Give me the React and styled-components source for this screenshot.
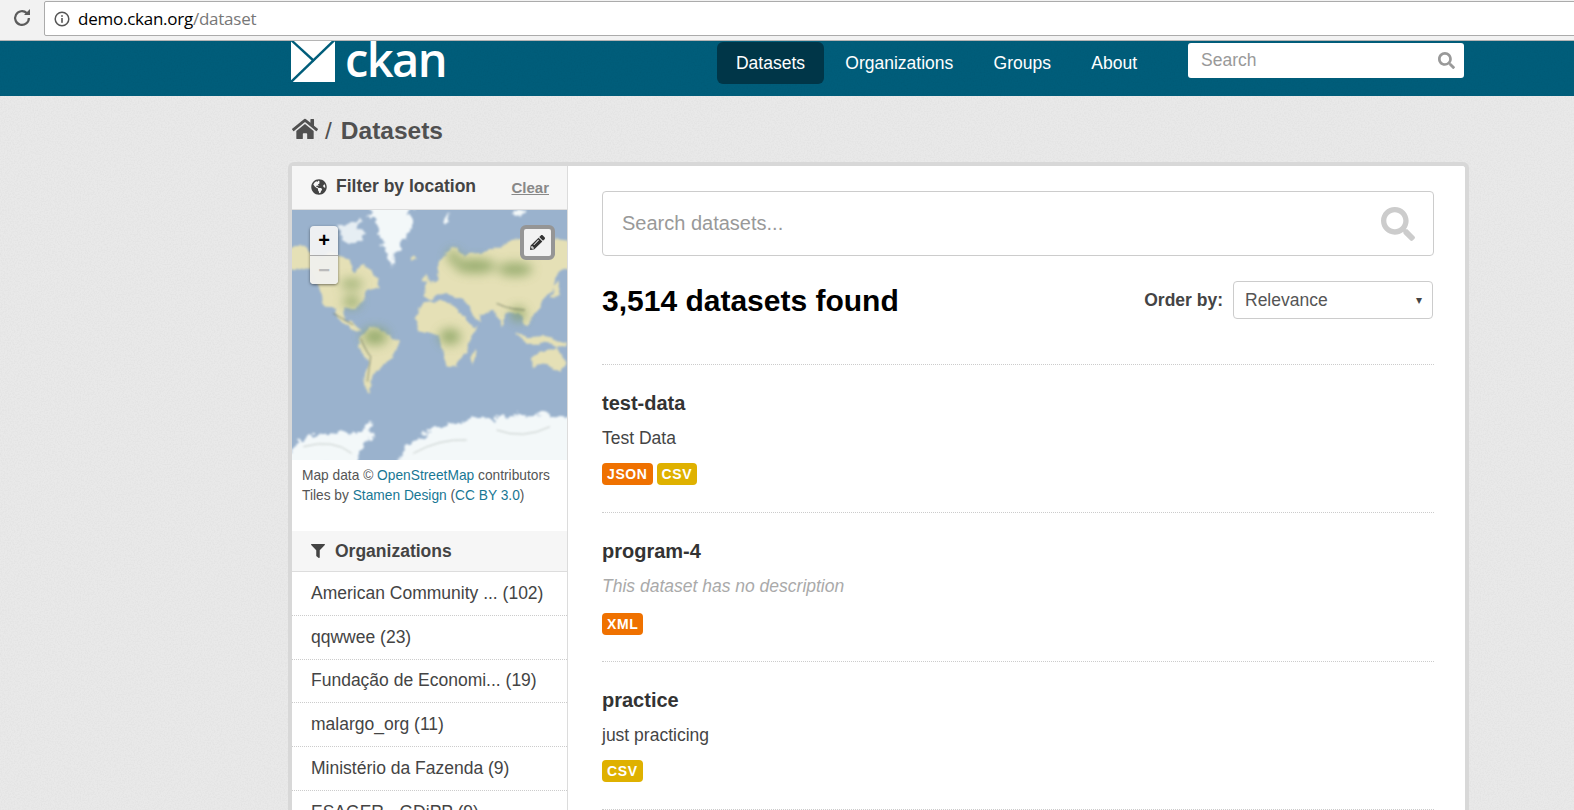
import React from "react";
import styled, { createGlobalStyle } from "styled-components";
import { FaHome, FaSearch, FaFilter, FaPencilAlt, FaGlobeAmericas } from "react-icons/fa";

const noise = "url(\"data:image/svg+xml,%3Csvg xmlns='http://www.w3.org/2000/svg' width='200' height='200'%3E%3Cfilter id='n'%3E%3CfeTurbulence type='fractalNoise' baseFrequency='0.7' numOctaves='2'/%3E%3CfeColorMatrix values='0 0 0 0 0 0 0 0 0 0 0 0 0 0 0 0 0 0 0.9 -0.38'/%3E%3C/filter%3E%3Crect width='200' height='200' filter='url(%23n)' opacity='0.07'/%3E%3C/svg%3E\")";

const Global = createGlobalStyle`
  html, body { margin: 0; padding: 0; height: 810px; overflow: hidden; }
  body { font-family: "Liberation Sans", Arial, sans-serif; background: #e9e9e9; }
  * { box-sizing: border-box; }
`;

const Page = styled.div`
  width: 1574px;
  height: 810px;
  overflow: hidden;
  background: #e9e9e9 ${noise};
`;

const BrowserBar = styled.div`
  height: 41px;
  display: flex;
  align-items: flex-start;
  padding: 1px 0 0 12px;
  gap: 12px;
  background: #f2f2f2;
  border-bottom: 1px solid #b5b5b5;
`;

const Reload = styled.div`
  display: flex;
  height: 33px;
  align-items: center;
  color: #5c5c5c;
`;

const UrlBox = styled.div`
  flex: 1;
  height: 35px;
  margin-right: -4px;
  display: flex;
  align-items: center;
  gap: 8px;
  padding-left: 9px;
  background: #fff;
  border: 1px solid #ababab;
  border-radius: 2px;
  font-family: "Open Sans", sans-serif;
  font-size: 17px;
  letter-spacing: -0.25px;
  color: #000;
`;

const UrlPath = styled.span`
  color: #777;
`;

const Header = styled.header`
  height: 55px;
  overflow: hidden;
  background: #005d7a ${noise};
  padding-left: 291px;
`;

const HeaderInner = styled.div`
  width: 1173px;
  height: 55px;
  display: flex;
  align-items: flex-start;
`;

const Logo = styled.div`
  display: flex;
  align-items: flex-start;
  gap: 10px;
  margin-right: auto;
`;

const LogoText = styled.span`
  font-family: "Open Sans", sans-serif;
  font-weight: 600;
  font-size: 47px;
  line-height: 36px;
  color: #fff;
  letter-spacing: -1.6px;
`;

const Nav = styled.nav`
  display: flex;
  gap: 2.3px;
  margin: 1px 32px 0 0;
`;

const NavLink = styled.a`
  height: 42px;
  padding: 0 19px;
  display: flex;
  align-items: center;
  font-size: 17.5px;
  color: #fff;
  border-radius: 6px;
  background: ${(p) => (p.$active ? "#003648" : "transparent")};
`;

const HeaderSearch = styled.div`
  width: 276px;
  height: 35px;
  margin-top: 2px;
  display: flex;
  align-items: center;
  justify-content: space-between;
  padding: 0 9px 0 13px;
  background: #fff;
  border-radius: 3px;
  font-size: 17.5px;
  color: #999;
`;

const Crumbs = styled.div`
  height: 66px;
  padding: 20px 0 0 292px;
  display: flex;
  align-items: flex-start;
  gap: 7px;
  font-size: 24.5px;
  line-height: 29px;
  color: #505050;
`;

const CrumbStrong = styled.strong`
  font-weight: 700;
  margin-left: 2px;
`;

const Wrapper = styled.div`
  margin-left: 288px;
  width: 1181px;
  display: flex;
  height: 663px;
  background: #fff;
  border: 4px solid #d8d8d8;
  border-bottom: 0;
  border-radius: 6px 6px 0 0;
`;

const Side = styled.aside`
  width: 276px;
  flex: none;
  border-right: 1px solid #dcdcdc;
`;

const SectionHead = styled.div`
  height: ${(p) => p.$h}px;
  display: flex;
  align-items: center;
  padding: 0 18px ${(p) => p.$pb || 0}px 19px;
  background: #f6f6f6;
  border-bottom: 1px solid #ddd;
  font-size: 17.5px;
  font-weight: 700;
  color: #444;
`;

const HeadIcon = styled.span`
  display: flex;
  width: ${(p) => p.$w}px;
  flex: none;
`;

const Clear = styled.a`
  margin-left: auto;
  font-size: 15px;
  margin-top: 1px;
  color: #888;
  text-decoration: underline;
`;

const MapBox = styled.div`
  position: relative;
  width: 275px;
  height: 250px;
  overflow: hidden;
  background: #9ab2cd;
`;

const ZoomControl = styled.div`
  position: absolute;
  left: 18px;
  top: 16px;
  width: 28px;
  border-radius: 4px;
  background: rgba(245, 245, 245, 0.92);
  box-shadow: 0 1px 3px rgba(0, 0, 0, 0.5);
`;

const ZoomBtn = styled.div`
  height: 29px;
  display: flex;
  align-items: center;
  justify-content: center;
  font-size: 20px;
  font-weight: 700;
  color: ${(p) => (p.$off ? "#bbb" : "#000")};
  background: ${(p) => (p.$off ? "rgba(238,238,232,.8)" : "transparent")};
  border-top: ${(p) => (p.$off ? "1px solid #aaa" : "0")};
  border-radius: 0 0 4px 4px;
`;

const DrawBtn = styled.div`
  position: absolute;
  left: 228px;
  top: 15px;
  width: 35px;
  height: 35px;
  display: flex;
  align-items: center;
  justify-content: center;
  background: #f2f2f2;
  border: 4px solid #959595;
  border-radius: 6px;
  color: #333;
`;

const Attribution = styled.p`
  margin: 0;
  height: 71px;
  padding: 6px 0 0 10px;
  font-size: 13.75px;
  line-height: 20px;
  color: #555;
`;

const TextLink = styled.a`
  color: #187794;
`;

const OrgList = styled.ul`
  list-style: none;
  margin: 0;
  padding: 0;
`;

const OrgItem = styled.li`
  height: 43.8px;
  padding: 0 0 0 19px;
  display: flex;
  align-items: center;
  font-size: 17.5px;
  color: #444;
  border-bottom: 1px dotted #ccc;
`;

const Main = styled.main`
  flex: 1;
  padding: 25px 31px 0 34px;
`;

const SearchBox = styled.div`
  height: 65px;
  display: flex;
  align-items: center;
  justify-content: space-between;
  padding: 0 18px 0 19px;
  border: 1px solid #ccc;
  border-radius: 4px;
  font-size: 20px;
  color: #999;
`;

const ResultBar = styled.div`
  height: 109px;
  padding-top: 25px;
  display: flex;
  justify-content: space-between;
  align-items: flex-start;
  border-bottom: 1px dotted #ccc;
`;

const Count = styled.h1`
  margin: 1px 0 0;
  font-size: 30px;
  line-height: 38px;
  font-weight: 700;
  color: #000;
`;

const OrderBy = styled.div`
  display: flex;
  align-items: center;
  gap: 10px;
  font-size: 17.5px;
  font-weight: 700;
  color: #444;
  margin-right: 1px;
`;

const SelectBox = styled.div`
  width: 200px;
  height: 38px;
  display: flex;
  align-items: center;
  justify-content: space-between;
  padding: 0 10px 0 11px;
  border: 1px solid #ccc;
  border-radius: 4px;
  font-weight: 400;
  color: #555;
`;

const Caret = styled.span`
  font-size: 12px;
  color: #444;
`;

const Row = styled.article`
  height: 148.3px;
  padding-top: 25px;
  border-bottom: 1px dotted #ccc;
`;

const Title = styled.h3`
  margin: 0;
  font-size: 20px;
  line-height: 26px;
  font-weight: 700;
  color: #333;
`;

const Desc = styled.div`
  margin-top: 10px;
  font-size: 17.5px;
  line-height: 25px;
  color: ${(p) => (p.$empty ? "#aaa" : "#444")};
  font-style: ${(p) => (p.$empty ? "italic" : "normal")};
`;

const Badges = styled.div`
  margin-top: ${(p) => (p.$low ? 14 : 12)}px;
  display: flex;
  gap: 4px;
`;

const Badge = styled.span`
  height: 22px;
  padding: 0 5px;
  display: flex;
  align-items: center;
  border-radius: 4px;
  font-size: 14px;
  font-weight: 700;
  letter-spacing: 0.6px;
  color: #fff;
  background: ${(p) => (p.$kind === "CSV" ? "#dfb100" : "#ef7100")};
`;

function BrowserIcons() {
  return (
    <Reload>
      <svg width="20" height="20" viewBox="0 0 18 18" fill="none">
        <path d="M15.2 9a6.2 6.2 0 1 1-1.9-4.4" stroke="#5c5c5c" strokeWidth="2" />
        <path d="M10.8 6.4h5.4V1z" fill="#5c5c5c" />
      </svg>
    </Reload>
  );
}

function InfoIcon() {
  return (
    <svg width="16" height="16" viewBox="0 0 16 16" fill="none">
      <circle cx="8" cy="8" r="6.8" stroke="#555" strokeWidth="1.5" />
      <rect x="7.2" y="7" width="1.6" height="4.8" fill="#555" />
      <rect x="7.2" y="4.2" width="1.6" height="1.6" fill="#555" />
    </svg>
  );
}

function LogoMark() {
  return (
    <svg width="44" height="41" viewBox="0 0 44 41">
      <rect width="44" height="41" fill="#fff" />
      <path d="M0 -1 L23 20" stroke="#005d7a" strokeWidth="2.4" />
      <path d="M43.5 -1 L0 41" stroke="#005d7a" strokeWidth="2.4" />
    </svg>
  );
}

function WorldMap() {
  return (
    <svg width="275" height="250" viewBox="36 150 825 750">
      <defs>
        <filter id="coast" x="-10%" y="-10%" width="120%" height="120%">
          <feTurbulence type="fractalNoise" baseFrequency="0.022" numOctaves="4" seed="7" result="t" />
          <feDisplacementMap in="SourceGraphic" in2="t" scale="26" xChannelSelector="R" yChannelSelector="G" />
          <feGaussianBlur stdDeviation="3" />
        </filter>
        <filter id="ice" x="-10%" y="-10%" width="120%" height="120%">
          <feTurbulence type="fractalNoise" baseFrequency="0.04" numOctaves="4" seed="3" result="t" />
          <feDisplacementMap in="SourceGraphic" in2="t" scale="44" xChannelSelector="R" yChannelSelector="G" />
          <feGaussianBlur stdDeviation="2.5" />
        </filter>
        <filter id="blur" x="-50%" y="-50%" width="200%" height="200%"><feGaussianBlur stdDeviation="16" /></filter>
        <filter id="ridge"><feGaussianBlur stdDeviation="3" /></filter>
      </defs>
      <rect x="36" y="150" width="825" height="750" fill="#9ab2cd" />
      <g filter="url(#coast)" fill="#e5e0b6">
        <path d="M20 262 L75 260 L100 292 L130 296 L150 282 L180 292 L205 296 L225 345 L245 322 L255 318 L292 352 L302 378 L265 394 L248 427 L222 447 L192 447 L198 482 L245 507 L228 512 L190 492 L160 457 L128 427 L118 392 L100 332 L70 322 L20 332 Z" />
        <path d="M238 537 L268 500 L300 510 L358 547 L338 587 L312 614 L282 642 L268 700 L255 674 L262 602 L238 560 Z" />
        <path d="M403 474 L428 430 L480 422 L532 447 L560 482 L592 500 L574 522 L557 572 L532 614 L500 626 L485 572 L478 529 L418 509 Z" />
        <path d="M430 409 L445 372 L470 352 L476 304 L510 266 L532 262 L548 290 L640 268 L700 240 L790 228 L880 246 L880 327 L834 337 L822 387 L787 422 L762 474 L737 499 L712 454 L680 459 L660 504 L640 449 L605 459 L602 490 L565 454 L545 419 L500 399 L470 404 L448 424 Z" />
        <path d="M753 594 L785 570 L800 580 L830 560 L860 607 L842 636 L790 614 L755 619 Z" />
        <path d="M568 594 L583 564 L588 582 L576 614 Z" />
        <path d="M428 366 L445 344 L454 369 Z" />
        <path d="M392 290 L412 296 L396 306 Z" />
        <path d="M710 515 L745 535 L790 530 L862 545 L852 558 L790 551 L740 551 Z" />
        <path d="M823 382 L840 364 L832 404 L813 414 Z" />
      </g>
      <g filter="url(#blur)" fill="#7f9c58" opacity="0.75">
        <ellipse cx="285" cy="530" rx="38" ry="26" />
        <ellipse cx="510" cy="530" rx="32" ry="24" />
        <ellipse cx="585" cy="318" rx="62" ry="22" />
        <ellipse cx="705" cy="328" rx="52" ry="20" />
        <ellipse cx="215" cy="372" rx="34" ry="14" />
        <ellipse cx="215" cy="425" rx="26" ry="18" />
        <ellipse cx="715" cy="462" rx="22" ry="22" />
        <ellipse cx="520" cy="290" rx="18" ry="20" />
      </g>
      <g fill="none" stroke="#5f6a52" strokeWidth="4" opacity="0.5" filter="url(#ridge)">
        <path d="M242 535 Q258 575 272 590 L262 665" />
        <path d="M650 430 Q690 450 735 450" />
        <path d="M160 460 L220 495" />
      </g>
      <g filter="url(#ice)" fill="#f3f8f9">
        <path d="M262 130 L398 130 L388 215 L348 280 L330 320 L310 260 L288 200 Z" />
        <path d="M20 880 L90 826 L180 816 L235 819 L272 786 L284 829 L234 864 L234 920 L20 920 Z" />
        <path d="M355 888 L400 839 L470 804 L580 769 L640 776 L700 766 L880 766 L880 920 L355 920 Z" />
        <path d="M478 178 L512 156 L492 192 Z" />
        <path d="M168 195 L232 183 L252 230 L210 252 L178 226 Z" opacity="0.85" />
        <path d="M700 150 L730 150 L722 175 Z" />
      </g>
      <g fill="none" stroke="#8d968f" strokeWidth="3" opacity="0.45" filter="url(#ridge)">
        <path d="M400 880 Q480 835 560 840" />
        <path d="M650 810 Q730 840 810 800" />
        <path d="M70 860 Q160 835 215 880" />
      </g>
    </svg>
  );
}

const orgs = [
  "American Community ... (102)",
  "qqwwee (23)",
  "Fundação de Economi... (19)",
  "malargo_org (11)",
  "Ministério da Fazenda (9)",
  "ESAGER - GDiPP (9)",
];

const rows = [
  { title: "test-data", desc: "Test Data", badges: ["JSON", "CSV"] },
  { title: "program-4", desc: "This dataset has no description", empty: true, badges: ["XML"] },
  { title: "practice", desc: "just practicing", badges: ["CSV"] },
];

export default function App() {
  return (
    <Page>
      <Global />
      <BrowserBar>
        <BrowserIcons />
        <UrlBox>
          <InfoIcon />
          <span>
            demo.ckan.org<UrlPath>/dataset</UrlPath>
          </span>
        </UrlBox>
      </BrowserBar>
      <Header>
        <HeaderInner>
          <Logo>
            <LogoMark />
            <LogoText>ckan</LogoText>
          </Logo>
          <Nav>
            <NavLink $active>Datasets</NavLink>
            <NavLink>Organizations</NavLink>
            <NavLink>Groups</NavLink>
            <NavLink>About</NavLink>
          </Nav>
          <HeaderSearch>
            Search
            <FaSearch size={17} color="#999" />
          </HeaderSearch>
        </HeaderInner>
      </Header>
      <Crumbs>
        <FaHome size={26} />
        <span>/</span>
        <CrumbStrong>Datasets</CrumbStrong>
      </Crumbs>
      <Wrapper>
        <Side>
          <SectionHead $h={44} $pb={2}>
            <HeadIcon $w={25}><FaGlobeAmericas size={16} /></HeadIcon>
            Filter by location
            <Clear>Clear</Clear>
          </SectionHead>
          <MapBox>
            <WorldMap />
            <ZoomControl>
              <ZoomBtn>+</ZoomBtn>
              <ZoomBtn $off>−</ZoomBtn>
            </ZoomControl>
            <DrawBtn><FaPencilAlt size={15} /></DrawBtn>
          </MapBox>
          <Attribution>
            Map data © <TextLink>OpenStreetMap</TextLink> contributors
            <br />
            Tiles by <TextLink>Stamen Design</TextLink> (<TextLink>CC BY 3.0</TextLink>)
          </Attribution>
          <SectionHead $h={41}>
            <HeadIcon $w={24}><FaFilter size={14} /></HeadIcon>
            Organizations
          </SectionHead>
          <OrgList>
            {orgs.map((o) => (
              <OrgItem key={o}>{o}</OrgItem>
            ))}
          </OrgList>
        </Side>
        <Main>
          <SearchBox>
            Search datasets...
            <FaSearch size={34} color="#ccc" />
          </SearchBox>
          <ResultBar>
            <Count>3,514 datasets found</Count>
            <OrderBy>
              Order by:
              <SelectBox>
                Relevance
                <Caret>▾</Caret>
              </SelectBox>
            </OrderBy>
          </ResultBar>
          {rows.map((r) => (
            <Row key={r.title}>
              <Title>{r.title}</Title>
              <Desc $empty={r.empty}>{r.desc}</Desc>
              <Badges $low={r.empty}>
                {r.badges.map((b) => (
                  <Badge key={b} $kind={b}>{b}</Badge>
                ))}
              </Badges>
            </Row>
          ))}
        </Main>
      </Wrapper>
    </Page>
  );
}
